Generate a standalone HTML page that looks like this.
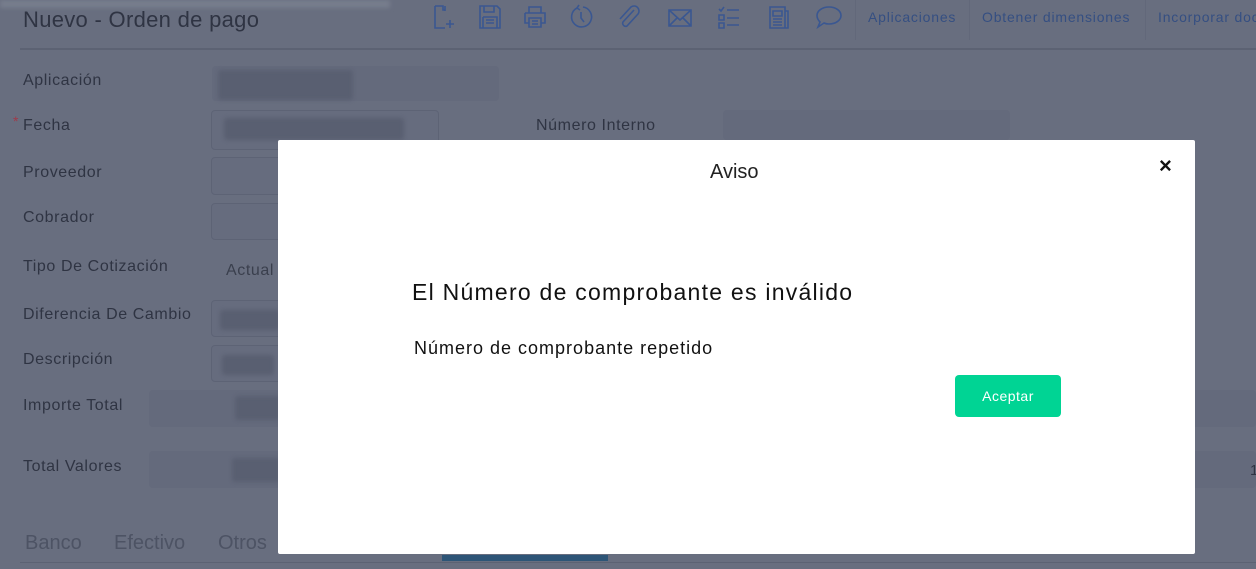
<!DOCTYPE html>
<html><head><meta charset="utf-8"><style>
*{margin:0;padding:0;box-sizing:border-box}
body{width:1256px;height:569px;overflow:hidden;background:#686e7f;font-family:"Liberation Sans",sans-serif;position:relative}
.a{position:absolute;white-space:nowrap}
.lbl{position:absolute;left:23px;font-size:16px;color:#2f3443;letter-spacing:.6px;white-space:nowrap}
.box{position:absolute;border:1px solid #5d6375;border-radius:4px;background:#666c7e}
.blur{position:absolute;background:#595f71;border-radius:3px;filter:blur(2px)}
.tb{position:absolute;top:9px;font-size:14px;color:#354f82;letter-spacing:.8px;white-space:nowrap}
.sep{position:absolute;top:0;width:1px;height:40px;background:#62687a}
svg.i{position:absolute;top:4px;stroke:#3a5791;fill:none;stroke-width:1.6}
</style></head><body>
<div class="a" style="left:0;top:0;width:390px;height:8px;background:#777d8d;filter:blur(2px)"></div>
<div class="a" style="left:23px;top:7px;font-size:22px;color:#2f3443;letter-spacing:.3px">Nuevo - Orden de pago</div>
<div class="a" style="left:20px;top:48px;width:1236px;height:2px;background:#5c6273"></div>
<svg class="i" style="left:432px" width="26" height="26" viewBox="0 0 26 26"><path d="M3 2h8v4h2v-4M3 2v22h10M18 16v8M14 20h8M13 2v5"/></svg>
<svg class="i" style="left:478px" width="24" height="26" viewBox="0 0 24 26"><path d="M2 2h17l3 3v19H2zM6 2v6h10V2M5 13h14v11M5 13v11M8 16h8M8 19h8"/></svg>
<svg class="i" style="left:522px" width="26" height="26" viewBox="0 0 26 26"><path d="M7 9V3h12v6M3 9h20v10h-4M3 9v10h4M7 14h12v9H7zM10 17h6M10 20h6"/></svg>
<svg class="i" style="left:568px" width="26" height="26" viewBox="0 0 26 26"><path d="M9 4a10 10 0 1 0 6-1M9 4l2-3M9 4l3 2M13 8v6l3 4"/></svg>
<svg class="i" style="left:616px" width="26" height="26" viewBox="0 0 26 26"><path d="M18 6L7 18a3 3 0 0 0 4 4L22 10a5 5 0 0 0-7-7L4 15"/></svg>
<svg class="i" style="left:666px" width="28" height="26" viewBox="0 0 28 26"><path d="M3 6h22v16H3zM3 6l11 10 11-10M3 22l8-8M25 22l-8-8"/></svg>
<svg class="i" style="left:716px" width="28" height="26" viewBox="0 0 28 26"><path d="M3 5l2 2 3-4M3 11h5v5H3zM3 19h5v5H3zM11 6h12M11 14h12M11 21h12"/></svg>
<svg class="i" style="left:766px" width="26" height="26" viewBox="0 0 26 26"><path d="M4 3h15v21H4zM19 7h3v17h-3M7 7h9v5H7zM7 15h9M7 18h9M7 21h9"/></svg>
<svg class="i" style="left:814px" width="30" height="26" viewBox="0 0 30 26"><path d="M15 3c7 0 12 4 12 8.5S22 20 15 20c-2 0-3 0-5-1l-6 4 2-5c-2-2-3-4-3-6.5C3 7 8 3 15 3z"/></svg>
<div class="sep" style="left:855px"></div>
<div class="tb" style="left:868px">Aplicaciones</div>
<div class="sep" style="left:969px"></div>
<div class="tb" style="left:982px">Obtener dimensiones</div>
<div class="sep" style="left:1145px"></div>
<div class="tb" style="left:1158px">Incorporar doc</div>

<div class="lbl" style="top:72px">Aplicación</div>
<div class="a" style="left:212px;top:66px;width:287px;height:35px;background:#646a7c;border-radius:4px"></div>
<div class="blur" style="left:218px;top:70px;width:135px;height:30px"></div>
<div class="a" style="left:13px;top:113px;color:#a03a4a;font-size:14px">*</div>
<div class="lbl" style="top:117px">Fecha</div>
<div class="box" style="left:211px;top:110px;width:228px;height:40px"></div>
<div class="blur" style="left:224px;top:118px;width:180px;height:22px"></div>
<div class="lbl" style="left:536px;top:117px">Número Interno</div>
<div class="a" style="left:723px;top:110px;width:287px;height:30px;background:#646a7c;border-radius:4px"></div>
<div class="lbl" style="top:164px">Proveedor</div>
<div class="box" style="left:211px;top:157px;width:80px;height:38px"></div>
<div class="lbl" style="top:209px">Cobrador</div>
<div class="box" style="left:211px;top:203px;width:80px;height:37px"></div>
<div class="lbl" style="top:258px">Tipo De Cotización</div>
<div class="a" style="left:226px;top:262px;font-size:16px;color:#3a3f4d;letter-spacing:.6px">Actual</div>
<div class="lbl" style="top:306px">Diferencia De Cambio</div>
<div class="box" style="left:211px;top:300px;width:80px;height:37px"></div>
<div class="blur" style="left:220px;top:310px;width:60px;height:20px"></div>
<div class="lbl" style="top:351px">Descripción</div>
<div class="box" style="left:211px;top:345px;width:80px;height:37px"></div>
<div class="blur" style="left:222px;top:355px;width:52px;height:20px"></div>
<div class="lbl" style="top:397px">Importe Total</div>
<div class="a" style="left:149px;top:390px;width:1107px;height:37px;background:#646a7c;border-radius:4px"></div>
<div class="blur" style="left:235px;top:396px;width:45px;height:24px"></div>
<div class="lbl" style="top:458px">Total Valores</div>
<div class="a" style="left:149px;top:451px;width:1107px;height:37px;background:#646a7c;border-radius:4px"></div>
<div class="blur" style="left:232px;top:458px;width:48px;height:24px"></div>
<div class="a" style="left:1250px;top:462px;font-size:15px;color:#2f3443">1</div>
<div class="a" style="left:25px;top:532px;font-size:20px;color:#4d5364">Banco</div>
<div class="a" style="left:114px;top:532px;font-size:20px;color:#4d5364">Efectivo</div>
<div class="a" style="left:218px;top:532px;font-size:20px;color:#4d5364">Otros</div>
<div class="a" style="left:20px;top:562px;width:1236px;height:1px;background:#5c6273"></div>
<div class="a" style="left:442px;top:555px;width:166px;height:6px;background:#2d5577"></div>

<div class="a" style="left:278px;top:140px;width:917px;height:414px;background:#fff;border-radius:2px">
 <div class="a" style="left:432px;top:21px;font-size:20px;color:#222">Aviso</div>
 <div class="a" style="left:881px;top:13px;font-size:22px;font-weight:bold;color:#111">×</div>
 <div class="a" style="left:134px;top:139px;font-size:23px;color:#111;letter-spacing:1.25px">El Número de comprobante es inválido</div>
 <div class="a" style="left:136px;top:198px;font-size:18px;color:#111;letter-spacing:1px">Número de comprobante repetido</div>
 <div class="a" style="left:677px;top:235px;width:106px;height:42px;background:#00d494;border-radius:4px;color:#fff;font-size:14px;text-align:center;line-height:42px;letter-spacing:.5px">Aceptar</div>
</div>
</body></html>
